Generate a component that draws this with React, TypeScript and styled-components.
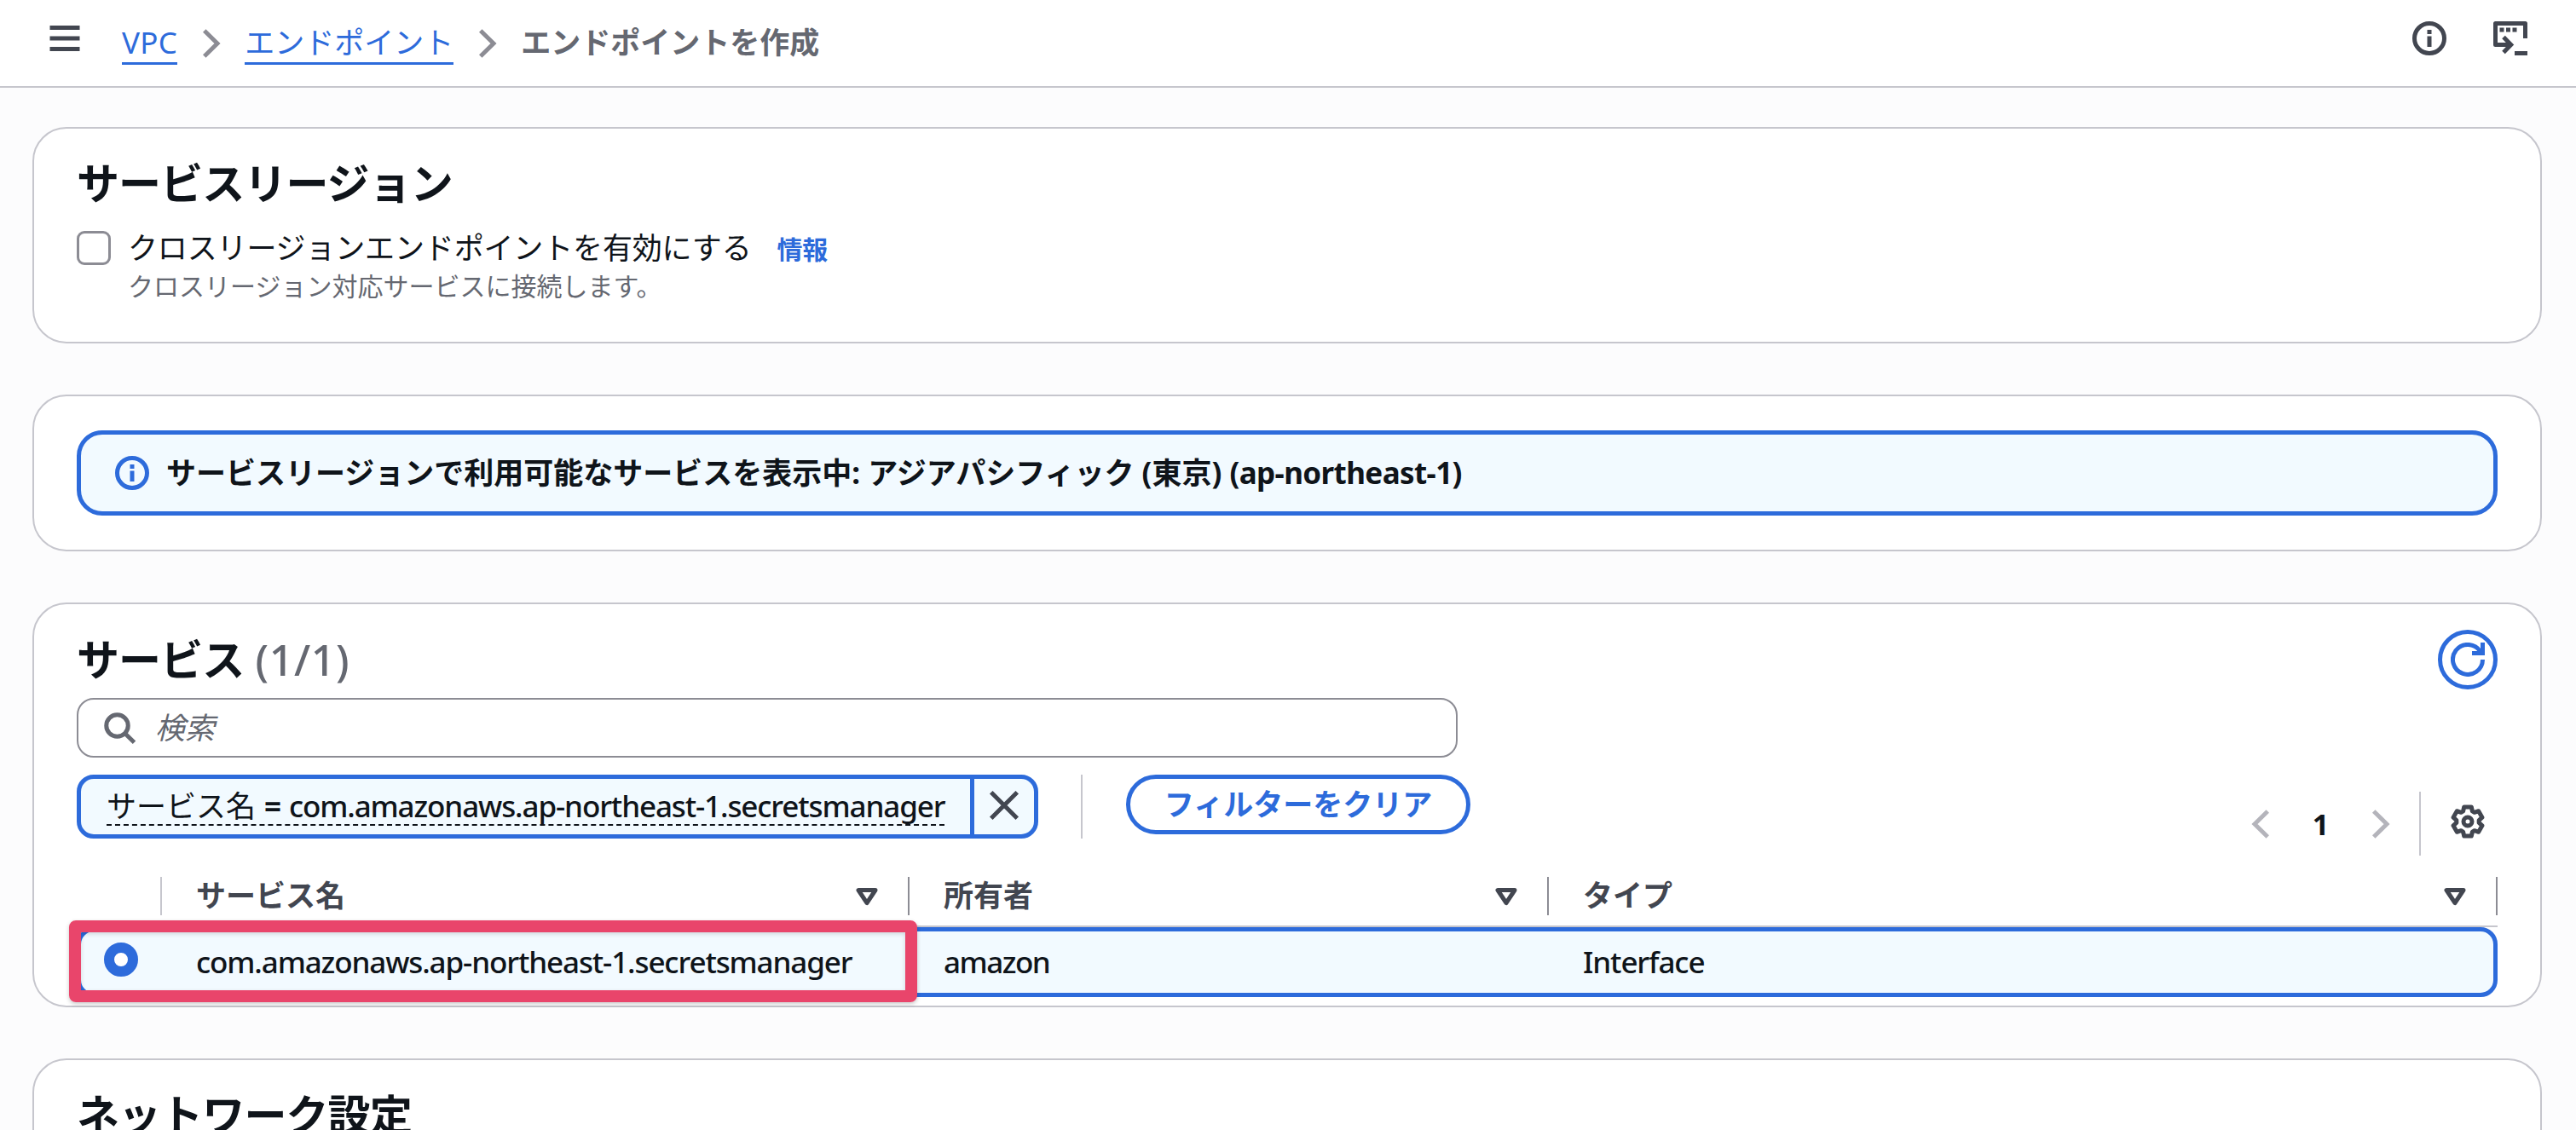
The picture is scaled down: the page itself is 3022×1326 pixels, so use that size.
import React from "react";
import styled, { createGlobalStyle, css } from "styled-components";

const blue = "#2d6bdb";
const ink = "#0f141a";
const slate = "#424650";
const gray = "#656871";
const line = "#c6c6cd";
const edge = "#8c8c94";
const tint = "#f2faff";

const GlobalStyle = createGlobalStyle`
  * { box-sizing: border-box; }
  html, body { margin: 0; background: #fcfcfd; }
  body {
    height: 1326px;
    overflow: hidden;
    color: ${ink};
    font-family: "Noto Sans", "Noto Sans CJK JP", sans-serif;
    font-size: 35px;
    line-height: 50px;
  }
  svg { display: block; flex: none; }
`;

const Page = styled.div`
  height: 1326px;
  overflow: hidden;
`;

const TopBar = styled.header`
  display: flex;
  align-items: center;
  height: 103px;
  padding: 0 57px 0 56px;
  background: #fff;
  border-bottom: 2px solid ${line};
`;

const MenuButton = styled.span`
  display: flex;
  margin: 0 47px 11px 0;
`;

const Trail = styled.nav`
  display: flex;
  flex: 1;
  align-items: center;
  white-space: nowrap;
`;

const Crumb = styled.a<{ $tight?: string }>`
  height: 50px;
  line-height: 47px;
  color: ${blue};
  border-bottom: 3px solid ${blue};
  letter-spacing: ${(p) => p.$tight ?? "0"};
`;

const CurrentCrumb = styled.span`
  padding-bottom: 2px;
  color: ${gray};
  font-weight: 700;
`;

const CrumbArrow = styled.span`
  display: flex;
  width: 40px;
  margin: 0 19px 0 20px;
`;

const TopActions = styled.div`
  display: flex;
  gap: 55px;
`;

const ActionIcon = styled.span<{ $raise?: number }>`
  display: flex;
  margin-bottom: ${(p) => p.$raise ?? 0}px;
`;

const Main = styled.main`
  display: flex;
  flex-direction: column;
  gap: 60px;
  padding: 46px 40px 0 38px;
`;

const Card = styled.section<{ $height: number }>`
  flex: none;
  height: ${(p) => p.$height}px;
  padding: 0 50px;
  background: #fff;
  border: 2px solid ${line};
  border-radius: 40px;
`;

const Title = styled.h2`
  margin: 0;
  font-size: 50px;
  line-height: 60px;
  font-weight: 700;
  letter-spacing: -0.9px;
  white-space: nowrap;
`;

const TitleCount = styled.span`
  margin-left: 1px;
  color: ${gray};
  font-weight: 500;
  letter-spacing: 0.6px;
`;

const RegionBody = styled.div`
  padding-top: 34px;
`;

const CheckRow = styled.div`
  display: grid;
  grid-template-columns: 40px 1fr;
  column-gap: 20px;
  margin-top: 21px;
`;

const CheckBox = styled.span`
  width: 40px;
  height: 40px;
  margin-top: 5px;
  border: 3px solid ${edge};
  border-radius: 9px;
`;

const CheckLabel = styled.div`
  display: flex;
  align-items: baseline;
  gap: 30px;
  height: 50px;
  letter-spacing: -0.15px;
  white-space: nowrap;
`;

const InfoLink = styled.a`
  color: ${blue};
  font-size: 30px;
  font-weight: 700;
`;

const Hint = styled.div`
  grid-column: 2;
  color: ${gray};
  font-size: 30px;
  line-height: 40px;
`;

const Alert = styled.div`
  display: flex;
  align-items: center;
  gap: 20px;
  height: 100px;
  margin-top: 40px;
  padding: 0 40px;
  background: ${tint};
  border: 5px solid ${blue};
  border-radius: 30px;
  font-weight: 700;
  white-space: nowrap;
`;

const AlertLatin = styled.span`
  letter-spacing: -0.6px;
`;

const TableHead = styled.div`
  display: flex;
  align-items: center;
  justify-content: space-between;
  padding-top: 30px;
  height: 100px;
`;

const RefreshButton = styled.button`
  display: grid;
  place-items: center;
  width: 70px;
  height: 70px;
  padding: 0;
  background: #fff;
  border: 5px solid ${blue};
  border-radius: 50%;
`;

const SearchField = styled.label`
  display: flex;
  align-items: center;
  gap: 22px;
  width: 1620px;
  height: 70px;
  margin-top: 10px;
  padding: 0 28px;
  border: 2px solid ${edge};
  border-radius: 20px;
  color: ${gray};
  font-style: italic;
`;

const Tools = styled.div`
  display: flex;
  align-items: flex-start;
  justify-content: space-between;
  height: 140px;
  padding-top: 20px;
`;

const Filters = styled.div`
  display: flex;
  align-items: flex-start;
`;

const Token = styled.div`
  display: flex;
  height: 75px;
  background: ${tint};
  border: 5px solid ${blue};
  border-radius: 20px;
  white-space: nowrap;
`;

const TokenLabel = styled.div`
  width: 1043px;
  padding: 8px 30px 0;
`;

const TokenText = styled.span`
  display: flex;
  gap: 10px;
  width: 983px;
  height: 47px;
  line-height: 48px;
  border-bottom: 2px dashed ${ink};
`;

const Latin = styled.span<{ $tight?: string; $weight?: number }>`
  letter-spacing: ${(p) => p.$tight ?? "-1.12px"};
  font-weight: ${(p) => p.$weight ?? 500};
`;

const TokenClose = styled.span`
  display: grid;
  place-items: center;
  width: 75px;
  padding-bottom: 3px;
  border-left: 5px solid ${blue};
`;

const Rule = styled.span`
  width: 2px;
  height: 75px;
  background: ${line};
`;

const ClearButton = styled.button`
  width: 404px;
  height: 70px;
  padding: 0 0 1px;
  background: #fff;
  border: 5px solid ${blue};
  border-radius: 50px;
  color: ${blue};
  font: inherit;
  font-weight: 700;
  line-height: 50px;
`;

const FilterRule = styled(Rule)`
  margin: 0 51px 0 50px;
`;

const Pager = styled.div`
  display: flex;
  align-items: center;
  height: 75px;
  margin-top: 20px;
`;

const PagerArrow = styled.span`
  display: flex;
  width: 40px;
`;

const PageNumber = styled.span`
  width: 101px;
  text-align: center;
  font-weight: 700;
  font-size: 34px;
`;

const PagerRule = styled(Rule)`
  margin: 0 35px 0 25px;
`;

const GearSlot = styled.span`
  display: flex;
  margin: 0 15px 5px 0;
`;

const columns = css`
  display: grid;
  grid-template-columns: 100px 877px 750px 1113px;
`;

const HeaderRow = styled.div`
  ${columns}
  height: 59px;
  border-bottom: 2px solid ${line};
`;

const HeaderCell = styled.div<{ $faint?: boolean }>`
  display: flex;
  align-items: center;
  justify-content: space-between;
  height: 45px;
  padding: 0 28px 0 40px;
  border-right: 2px solid ${(p) => (p.$faint ? line : edge)};
  color: ${slate};
  font-weight: 700;
  line-height: 45px;
`;

const HeaderName = styled.span`
  padding-bottom: 3px;
`;

const BodyRow = styled.div`
  ${columns}
  position: relative;
  height: 82px;
  background: ${tint};
  border: 5px solid ${blue};
  border-radius: 20px;
`;

const RadioCell = styled.div`
  padding: 13px 0 0 27px;
`;

const Radio = styled.span`
  display: block;
  width: 40px;
  height: 40px;
  border: 12px solid ${blue};
  border-radius: 50%;
  background: #fff;
`;

const BodyCell = styled.div`
  padding: 11px 0 0 35px;
  white-space: nowrap;
`;

const Highlight = styled.span`
  position: absolute;
  left: -14px;
  top: -13px;
  width: 995px;
  height: 96px;
  border: 14px solid #e9456b;
  border-radius: 8px;
  box-shadow: 0 2px 5px rgba(0, 0, 0, 0.22), inset 0 2px 5px rgba(0, 0, 0, 0.15);
`;

type IconProps = { size?: number; color?: string };

const Icon = ({ size = 40, color = slate, children }: IconProps & { children: React.ReactNode }) => (
  <svg width={size} height={size} viewBox="0 0 16 16" fill="none" stroke={color} strokeWidth="2">
    {children}
  </svg>
);

const MenuIcon = () => (
  <Icon>
    <path d="M1 3h14M1 8h14M1 13h14" />
  </Icon>
);

const ChevronIcon = ({ color, left }: { color: string; left?: boolean }) => (
  <Icon color={color}>
    <path d={left ? "M11.3 2 5.2 8l6.1 6" : "M4.7 2 10.8 8l-6.1 6"} />
  </Icon>
);

const InfoIcon = ({ color }: IconProps) => (
  <Icon color={color}>
    <circle cx="8" cy="8" r="7" />
    <path d="M8 7v5M8 4v2" />
  </Icon>
);

const ShellIcon = () => (
  <Icon>
    <path d="M15 8V1H1v10h7" strokeLinejoin="round" />
    <path d="m4.8 7.4 3.5 3.6-3.5 3.6M10 15h6" />
    <path d="M3 4h2M6 4h2M9 4h2" />
  </Icon>
);

const SearchIcon = () => (
  <Icon color={gray}>
    <circle cx="7" cy="7" r="5.1" />
    <path d="m10.5 10.5 4.5 4.4" />
  </Icon>
);

const CloseIcon = () => (
  <Icon>
    <path d="m1.9 1.9 12.2 12.2M14.1 1.9 1.9 14.1" />
  </Icon>
);

const RefreshIcon = () => (
  <Icon color={blue}>
    <path d="M15 8a7 7 0 1 1-1.1-3.8" />
    <path d="M10 5h5V0" />
  </Icon>
);

// Six lobes: each one is two outer corners joined to two points in the valleys.
const gearPoints = [0, 60, 120, 180, 240, 300]
  .flatMap((tip) => [
    [tip - 24, 5.3],
    [tip - 14, 7.05],
    [tip + 14, 7.05],
    [tip + 24, 5.3],
  ])
  .map(([deg, r]) => {
    const a = ((deg - 90) * Math.PI) / 180;
    return `${(8 + r * Math.cos(a)).toFixed(2)},${(8 + r * Math.sin(a)).toFixed(2)}`;
  })
  .join(" ");

const GearIcon = () => (
  <Icon>
    <polygon points={gearPoints} strokeLinejoin="round" />
    <circle cx="8" cy="8" r="2" />
  </Icon>
);

const SortIcon = () => (
  <Icon>
    <path d="M4 5h8l-4 6z" strokeLinejoin="round" />
  </Icon>
);

const SERVICE = "com.amazonaws.ap-northeast-1.secretsmanager";

export default function App() {
  return (
    <Page>
      <GlobalStyle />
      <TopBar>
        <MenuButton>
          <MenuIcon />
        </MenuButton>
        <Trail>
          <Crumb $tight="0.3px">VPC</Crumb>
          <CrumbArrow>
            <ChevronIcon color={edge} />
          </CrumbArrow>
          <Crumb>エンドポイント</Crumb>
          <CrumbArrow>
            <ChevronIcon color={edge} />
          </CrumbArrow>
          <CurrentCrumb>エンドポイントを作成</CurrentCrumb>
        </Trail>
        <TopActions>
          <ActionIcon $raise={11}>
            <InfoIcon />
          </ActionIcon>
          <ActionIcon>
            <ShellIcon />
          </ActionIcon>
        </TopActions>
      </TopBar>

      <Main>
        <Card $height={254}>
          <RegionBody>
            <Title>サービスリージョン</Title>
            <CheckRow>
              <CheckBox />
              <CheckLabel>
                クロスリージョンエンドポイントを有効にする
                <InfoLink>情報</InfoLink>
              </CheckLabel>
              <Hint>クロスリージョン対応サービスに接続します。</Hint>
            </CheckRow>
          </RegionBody>
        </Card>

        <Card $height={184}>
          <Alert>
            <InfoIcon color={blue} />
            <span>
              サービスリージョンで利用可能なサービスを表示中: アジアパシフィック (東京){" "}
              <AlertLatin>(ap-northeast-1)</AlertLatin>
            </span>
          </Alert>
        </Card>

        <Card $height={475}>
          <TableHead>
            <Title>
              サービス <TitleCount>(1/1)</TitleCount>
            </Title>
            <RefreshButton>
              <RefreshIcon />
            </RefreshButton>
          </TableHead>
          <SearchField>
            <SearchIcon />
            検索
          </SearchField>
          <Tools>
            <Filters>
              <Token>
                <TokenLabel>
                  <TokenText>
                    <span>サービス名</span>
                    <Latin $weight={700}>=</Latin>
                    <Latin>{SERVICE}</Latin>
                  </TokenText>
                </TokenLabel>
                <TokenClose>
                  <CloseIcon />
                </TokenClose>
              </Token>
              <FilterRule />
              <ClearButton>フィルターをクリア</ClearButton>
            </Filters>
            <Pager>
              <PagerArrow>
                <ChevronIcon left color="#b4b4bb" />
              </PagerArrow>
              <PageNumber>1</PageNumber>
              <PagerArrow>
                <ChevronIcon color="#b4b4bb" />
              </PagerArrow>
              <PagerRule />
              <GearSlot>
                <GearIcon />
              </GearSlot>
            </Pager>
          </Tools>
          <HeaderRow>
            <HeaderCell $faint />
            {["サービス名", "所有者", "タイプ"].map((name) => (
              <HeaderCell key={name}>
                <HeaderName>{name}</HeaderName>
                <SortIcon />
              </HeaderCell>
            ))}
          </HeaderRow>
          <BodyRow>
            <RadioCell>
              <Radio />
            </RadioCell>
            <BodyCell>
              <Latin>{SERVICE}</Latin>
            </BodyCell>
            <BodyCell>
              <Latin $tight="-1.5px">amazon</Latin>
            </BodyCell>
            <BodyCell>
              <Latin>Interface</Latin>
            </BodyCell>
            <Highlight />
          </BodyRow>
        </Card>

        <Card $height={254}>
          <RegionBody>
            <Title>ネットワーク設定</Title>
          </RegionBody>
        </Card>
      </Main>
    </Page>
  );
}
